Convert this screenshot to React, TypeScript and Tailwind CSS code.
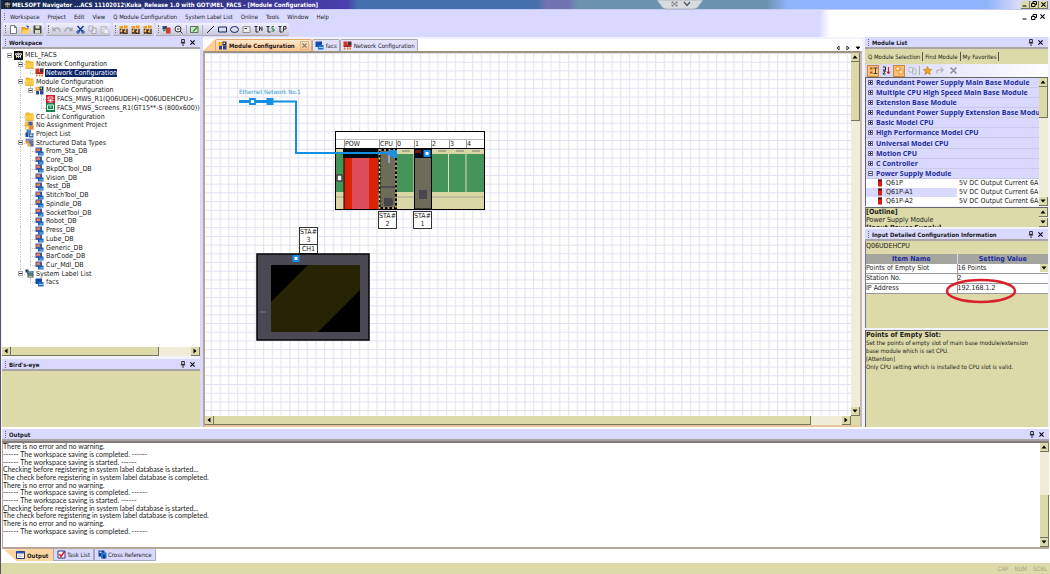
import { useState, ReactNode } from 'react'
import clsx from 'clsx'

type IconName =
    | 'root' | 'folder' | 'net' | 'module' | 'plc' | 'got' | 'unassigned'
    | 'projects' | 'types' | 'struct' | 'labels' | 'label'

interface TreeNode {
    text: string
    icon: IconName
    open?: boolean
    guides: string
}

const structs = ['From_Sta_DB', 'Core_DB', 'BkpDCTool_DB', 'Vision_DB', 'Test_DB', 'StitchTool_DB', 'Spindle_DB', 'SocketTool_DB', 'Robot_DB', 'Press_DB', 'Lube_DB', 'Generic_DB', 'BarCode_DB', 'Cur_Mdl_DB']

// guides: one letter per column, l = line, e = last child, o = empty
const tree: TreeNode[] = [
    { text: 'MEL_FACS', icon: 'root', open: true, guides: 'o' },
    { text: 'Network Configuration', icon: 'folder', open: true, guides: 'ol' },
    { text: 'Network Configuration', icon: 'net', guides: 'ole' },
    { text: 'Module Configuration', icon: 'folder', open: true, guides: 'ol' },
    { text: 'Module Configuration', icon: 'module', open: true, guides: 'ole' },
    { text: 'FACS_MWS_R1(Q06UDEH)<Q06UDEHCPU>', icon: 'plc', guides: 'olol' },
    { text: 'FACS_MWS_Screens_R1(GT15**-S (800x600))', icon: 'got', guides: 'oloe' },
    { text: 'CC-Link Configuration', icon: 'folder', guides: 'ol' },
    { text: 'No Assignment Project', icon: 'unassigned', guides: 'ol' },
    { text: 'Project List', icon: 'projects', guides: 'ol' },
    { text: 'Structured Data Types', icon: 'types', open: true, guides: 'ol' },
    ...structs.map((text, i): TreeNode => ({ text, icon: 'struct', guides: i === structs.length - 1 ? 'ole' : 'oll' })),
    { text: 'System Label List', icon: 'labels', open: true, guides: 'oe' },
    { text: 'facs', icon: 'label', guides: 'ooe' },
]

const columnWidths = ['w-[11px]', 'w-[10px]', 'w-[11px]', 'w-[10px]']

const moduleGroups = ['Redundant Power Supply Main Base Module', 'Multiple CPU High Speed Main Base Module', 'Extension Base Module', 'Redundant Power Supply Extension Base Module', 'Basic Model CPU', 'High Performance Model CPU', 'Universal Model CPU', 'Motion CPU', 'C Controller', 'Power Supply Module']
const powerModules = ['Q61P', 'Q61P-A1', 'Q61P-A2']

const logLines = [
    'There is no error and no warning.',
    '------ The workspace saving is completed. ------',
    '------ The workspace saving is started. ------',
    'Checking before registering in system label database is started...',
    'The check before registering in system label database is completed.',
    'There is no error and no warning.',
    '------ The workspace saving is completed. ------',
    '------ The workspace saving is started. ------',
    'Checking before registering in system label database is started...',
    'The check before registering in system label database is completed.',
    'There is no error and no warning.',
    '------ The workspace saving is completed. ------',
]

const iconShapes: Record<IconName, ReactNode> = {
    root: <><path d="M0 0h18v18H0z" fill="#111" /><path d="M3 5h4v3H3zM11 5h4v3h-4zM5 8v6M9 3v11M13 8v6M4 11h10" stroke="#fff" strokeWidth="1.5" fill="none" /></>,
    folder: <><path d="M1 1h7l2 2h7v14H1z" fill="#f5b422" /><path d="M1 6h16v11H1z" fill="#ffcb4a" /><path d="M1 16.500h16" stroke="#c98913" /></>,
    net: <><path d="M1 1h7v7H1z" fill="#e03020" /><path d="M9 1h8v7H9z" fill="#48302c" /><path d="M1 8h16v4H1z" fill="#b42a1c" /><path d="M2 13h3v4H2zM8 13h3v4H8zM13 13h3v4h-3z" fill="#e8752a" /></>,
    module: <><path d="M1 2h8v8H1z" fill="#f2a822" /><path d="M9 1h8v8H9z" fill="#24345f" /><path d="M2 10h6v7H2zM10 9h7v8h-7z" fill="#27479a" /><path d="M4 4h3v3H4zM11 3h3v3h-3z" fill="#ffe28a" /></>,
    plc: <><path d="M0 0h18v18H0z" fill="#d9182c" /><path d="M4 4h10v4H4zM3 11h12M9 8v6M5 14h8" stroke="#fff" strokeWidth="1.5" fill="none" /></>,
    got: <><path d="M0 0h18v18H0z" fill="#128447" /><path d="M3 4h12v9H3z" stroke="#e9fff0" strokeWidth="2" fill="none" /><path d="M7 8h4" stroke="#e9fff0" strokeWidth="2" /></>,
    unassigned: <><path d="M0 1h8l2 2h7v14H0z" fill="#f6b735" /><path d="M7 1h8v8H7z" fill="#4a5da8" /><path d="M2 11h5v5H2z" fill="#fff0be" /><path d="M9 10h8v7H9z" fill="#e9853c" /></>,
    projects: <><path d="M3 1h9v7H3z" fill="#4389cf" /><path d="M1 7h6v9H1z" fill="#1d4d91" /><path d="M8 8h9v9H8z" fill="#3b63a8" /><path d="M10 10h5M10 13h5" stroke="#fff" strokeWidth="1.5" /></>,
    types: <><path d="M1 1h16v5H1z" fill="#7f8cb4" /><path d="M1 6h6v5H1z" fill="#ea8a27" /><path d="M7 6h10v6H7z" fill="#62749f" /><path d="M5 11h6v6H5z" fill="#efaa3a" /><path d="M11 12h6v5h-6z" fill="#3f66b6" /></>,
    struct: <><path d="M1 1h13v11H1z" fill="#4257a4" /><path d="M3 3h7v5H3z" fill="#ec7e4b" /><path d="M6 9h11v8H6z" fill="#1a62b5" /><path d="M9 14h7" stroke="#a8dcff" strokeWidth="1.500" /></>,
    labels: <><path d="M1 1h6v6H1z" fill="#1c2e66" /><path d="M4 4h13v6H4z" fill="#356f9a" /><path d="M5 10h12v7H5z" fill="#2b506a" /><path d="M7 6h8M7 12h8M7 15h8" stroke="#d6d680" strokeWidth="1.5" /></>,
    label: <><path d="M1 1h13v11H1z" fill="#1449a8" /><path d="M6 8h11v9H6z" fill="#1e6fd0" /><path d="M8 13h8" stroke="#cde9ff" strokeWidth="1.500" /></>,
}

const Icon = ({ name }: { name: IconName }) => (
    <svg viewBox="0 0 18 18" className="size-[9px] shrink-0">{iconShapes[name]}</svg>
)

const Toggle = ({ open, dark }: { open?: boolean, dark?: boolean }) => (
    <svg viewBox="0 0 5 5" className="size-[5px] shrink-0" shapeRendering="crispEdges">
        <path d="M0.5 0.5h4v4h-4z" fill="#fff" stroke={dark ? '#66669a' : '#a8a8b0'} />
        <path d="M1 2.500h3" stroke="#333" />
        {!open && <path d="M2.500 1v3" stroke="#333" />}
    </svg>
)

const Pin = () => (
    <svg viewBox="0 0 6 8" className="h-[7px] w-[6px]"><path d="M1.500 .5h3v3.500h-3zM.5 4.500h5M3 5v3" stroke="#111" fill="none" /></svg>
)

const Cross = ({ className = 'stroke-black' }: { className?: string }) => (
    <svg viewBox="0 0 6 6" className={clsx('size-[5px]', className)}><path d="M.5.5l5 5M5.500.5l-5 5" strokeWidth="1.300" fill="none" /></svg>
)

const PanelHeader = ({ title }: { title: string }) => (
    <div className="flex h-[12px] shrink-0 items-center border-b-2 border-[#a9a5a5] bg-[#d9d9ff] pl-[3px] pr-[5px]">
        <span className="mr-[3px] h-[7px] border-l border-dotted border-[#666]" />
        <h2 className="flex-1 truncate text-[6px] font-bold">{title}</h2>
        <div className="flex items-center gap-[3px]">
            <button aria-label={`Pin ${title}`}><Pin /></button>
            <button aria-label={`Close ${title}`} className="pl-px"><Cross /></button>
        </div>
    </div>
)

const arrows = {
    up: 'M4 2.500L6.500 5.500h-5z',
    down: 'M4 5.500L1.500 2.500h5z',
    left: 'M2.500 4L5.500 1.500v5z',
    right: 'M5.500 4L2.500 1.500v5z',
}

const ArrowButton = ({ dir }: { dir: keyof typeof arrows }) => (
    <button aria-label={`Scroll ${dir}`} className="flex size-[9px] shrink-0 items-center justify-center border-b border-r border-[#77745c] bg-[#dcdaa8]">
        <svg viewBox="0 0 8 8" className="size-[8px]"><path d={arrows[dir]} /></svg>
    </button>
)

const HScroll = ({ children }: { children: ReactNode }) => (
    <div className="flex h-[9px] shrink-0 bg-[#efedd8]">
        <ArrowButton dir="left" />
        <div className="flex flex-1">{children}</div>
        <ArrowButton dir="right" />
    </div>
)

const VScroll = ({ children }: { children?: ReactNode }) => (
    <div className="flex w-[9px] shrink-0 flex-col bg-[#efedd8]">
        <ArrowButton dir="up" />
        <div className="flex flex-1 flex-col">{children}</div>
        <ArrowButton dir="down" />
    </div>
)

const thumb = 'border-b border-r border-[#77745c] bg-[#dcdaa8]'

const TitleBar = () => (
    <header className="relative flex h-[10px] shrink-0 items-center border-b border-[#c9c9f4] bg-[linear-gradient(to_right,#10284e_0%,#4a3fae_33%,#4470ad_34%,#4470ad_51%,#7272b0_52%,#7272b0_54%,#6b92ae_55%,#6b92ae_73%,#8fb4fb_75%,#8fb4fb_94%,#d9d9f8_97%)] pl-[3px] text-white">
        <svg viewBox="0 0 14 14" className="mr-px size-[7px]"><path d="M0 0h14v14H0z" fill="#111" /><path d="M2 4h4v3H2zM8 4h4v3H8zM4 7v6M10 7v6M7 2v11" stroke="#fff" fill="none" /></svg>
        <h1 className="flex-1 text-[6px] font-bold whitespace-nowrap">MELSOFT Navigator ...ACS 11102012\Kuka_Release 1.0 with GOT\MEL_FACS - [Module Configuration]</h1>
        <svg viewBox="0 0 46 10" className="absolute left-[656px] top-0 h-[10px] w-[46px]">
            <path d="M0 0h46l-5 7q-2 2-4 2H9q-2 0-4-2z" fill="#d8dce0" stroke="#8da0ac" strokeWidth=".6" />
            <path d="M15 2l5 4M20 2l-5 4M15 3.500v-1.500h1.500M20 3.500v-1.500h-1.500M15 4.500v1.500h1.500M20 4.500v1.500h-1.500" stroke="#707478" strokeWidth=".8" fill="none" />
            <path d="M27 2l3 3.500 3-3.500" stroke="#555" strokeWidth="1.400" fill="none" />
        </svg>
        <WindowButtons raised />
    </header>
)

const WindowButtons = ({ raised }: { raised?: boolean }) => {
    const frame = clsx('flex h-[8px] w-[9px] items-center justify-center', raised && 'border-b border-r border-[#77745c] bg-[#dcdaa8]')
    return (
        <div className="flex pr-[2px]">
            <button aria-label="Minimize" className={frame}><svg viewBox="0 0 6 6" className="size-[6px]"><path d="M.5 5h4" stroke="#000" /></svg></button>
            <button aria-label="Restore" className={frame}><svg viewBox="0 0 6 6" className="size-[6px]"><path d="M2 2V.5h3.500v3H4M.5 2.500h3.500v3H.5z" stroke="#000" fill="none" /></svg></button>
            <button aria-label="Close" className={frame}><Cross /></button>
        </div>
    )
}

const menuItems = ['Workspace', 'Project', 'Edit', 'View', 'Q Module Configuration', 'System Label List', 'Online', 'Tools', 'Window', 'Help']

const MenuBar = () => (
    <nav className="flex h-[13px] shrink-0 items-center pl-[3px] pr-px">
        <span className="mr-[5px] h-[7px] border-l border-dotted border-[#777]" />
        <div className="flex flex-1 gap-[8px] text-[6px]">
            {menuItems.map(item => <button key={item} className="whitespace-nowrap">{item}</button>)}
        </div>
        <WindowButtons />
    </nav>
)

const Tool = ({ label, children }: { label: string, children: ReactNode }) => (
    <button aria-label={label}><svg viewBox="0 0 18 18" className="size-[9px]">{children}</svg></button>
)

const ToolGroup = ({ children }: { children: ReactNode }) => (
    <div className="flex h-[13px] items-center gap-[3px] rounded-r-xs border-b border-[#a9a9b4] bg-linear-to-b from-[#f0f0ff] to-[#c9c9da] px-[2px]">
        <span className="h-[8px] border-l border-dotted border-[#777]" />
        {children}
    </div>
)

const Modules = () => <><path d="M1 2h7v6H1zM10 1h7v6h-7z" fill="#f0a020" /><path d="M3 8v8h5v-6h3v7h5V8" stroke="#4b3220" strokeWidth="3" fill="none" /><path d="M2 12h4M10 13h4" stroke="#f4b942" strokeWidth="3" /></>

const Topology = ({ tag, color = '#333' }: { tag: string, color?: string }) => (
    <><path d="M1 3h6M4 3v11h5" stroke="#222" strokeWidth="2" fill="none" /><path d={tag} stroke={color} strokeWidth="2" fill="none" /></>
)

const Toolbar = () => (
    <div className="flex h-[14px] shrink-0 items-start gap-[2px] pl-[2px]">
        <ToolGroup>
            <Tool label="New"><path d="M3 1h8l4 4v12H3zM11 1v4h4" fill="#fff" stroke="#555" strokeWidth="1.500" /></Tool>
            <Tool label="Open"><path d="M1 4h6l2 2h6v10H1z" fill="#e89c1b" /><path d="M4 9h14l-3 8H1z" fill="#ffd052" /><path d="M10 1l6 1-2 5" fill="#2b55a8" /></Tool>
            <Tool label="Save"><path d="M1 1h14l2 2v14H1z" fill="#444837" /><path d="M5 1h8v6H5zM4 10h10v7H4z" fill="#d9dbc8" /></Tool>
        </ToolGroup>
        <ToolGroup>
            <Tool label="Undo"><path d="M2 5v6h6M3 10c3-6 12-6 13 3" stroke="#a9a9b0" strokeWidth="3" fill="none" /></Tool>
            <Tool label="Redo"><path d="M16 5v6h-6M15 10C12 4 3 4 2 13" stroke="#a9a9b0" strokeWidth="3" fill="none" /></Tool>
            <Tool label="Cut"><path d="M3 2l10 11M15 2L5 13" stroke="#173f99" strokeWidth="3" /><circle cx="4" cy="14" r="2.500" fill="none" stroke="#173f99" strokeWidth="2" /><circle cx="14" cy="14" r="2.500" fill="none" stroke="#173f99" strokeWidth="2" /></Tool>
            <Tool label="Copy"><path d="M2 2h8v10H2zM8 6h8v11H8z" fill="#ececf2" stroke="#9a9aa8" strokeWidth="1.500" /></Tool>
            <Tool label="Paste"><path d="M2 3h11v13H2z" fill="#dcdce4" stroke="#b0b0b8" strokeWidth="1.500" /><path d="M8 8h8v9H8z" fill="#f2f2f6" stroke="#b0b0b8" /></Tool>
        </ToolGroup>
        <ToolGroup>
            <Tool label="Module view"><Modules /></Tool>
            <Tool label="Module check"><Modules /></Tool>
            <Tool label="Module update"><Modules /></Tool>
        </ToolGroup>
        <ToolGroup>
            <Tool label="Parameters"><path d="M1 2h9v7H1z" fill="#2d4c75" /><path d="M8 5h9v12H8z" fill="#d23a32" /><path d="M2 11h5" stroke="#1c9d4f" strokeWidth="3" /></Tool>
            <Tool label="Zoom"><circle cx="8" cy="8" r="6" fill="#eef" stroke="#333" strokeWidth="2" /><path d="M12 12l5 5M6 8h5" stroke="#333" strokeWidth="2" /></Tool>
            <span className="h-[9px] border-l border-[#aaaab8]" />
            <Tool label="Edit comment"><path d="M1 3h15v12H1z" fill="#cfe7c5" stroke="#557755" strokeWidth="2" /><path d="M6 13l9-9" stroke="#2f9c34" strokeWidth="3" /></Tool>
            <span className="h-[9px] border-l border-[#aaaab8]" />
            <Tool label="Line"><path d="M2 16L16 2" stroke="#102660" strokeWidth="2" /></Tool>
            <Tool label="Rectangle"><path d="M1 4h16v10H1z" fill="none" stroke="#102660" strokeWidth="2" /></Tool>
            <Tool label="Ellipse"><ellipse cx="9" cy="9" rx="8" ry="6" fill="none" stroke="#102660" strokeWidth="2" /></Tool>
            <Tool label="Text box"><path d="M2 3h14v12H2z" fill="#eee" stroke="#777" strokeWidth="1.500" /><path d="M5 7h5" stroke="#333" strokeWidth="2" /></Tool>
            <Tool label="Network tree"><Topology tag="M11 12V3l5 8V3" /></Tool>
            <Tool label="Station tree"><Topology tag="M11 12h5V8h-4V3h4" color="#1c7c44" /></Tool>
            <Tool label="Project tree"><Topology tag="M11 13V3h5v5h-5" /></Tool>
        </ToolGroup>
    </div>
)

const TreeRow = ({ node, selected, onSelect }: { node: TreeNode, selected: boolean, onSelect: () => void }) => {
    const guides = node.guides.split('')
    return (
        <li className="flex min-h-0 flex-1 items-center pl-[2px]">
            {guides.map((guide, i) => {
                const last = i === guides.length - 1
                return (
                    <span key={i} className={clsx('relative flex h-full shrink-0 items-center', last ? 'w-[10px] pl-[3px]' : columnWidths[i])}>
                        {guide !== 'o' && <span className={clsx('absolute left-[5px] top-0 border-l border-dotted border-[#c5c5c5]', guide === 'l' ? 'h-full' : 'h-1/2')} />}
                        {last && guide !== 'o' && <span className="absolute left-[5px] top-1/2 w-[5px] border-t border-dotted border-[#c5c5c5]" />}
                        {last && node.open && <span className="relative"><Toggle open /></span>}
                    </span>
                )
            })}
            <Icon name={node.icon} />
            <button onClick={onSelect} className={clsx('ml-px whitespace-nowrap pl-px leading-[8px]', selected && 'bg-[#0a246a] text-white')}>{node.text}</button>
        </li>
    )
}

const WorkspacePanel = () => {
    const [selected, setSelected] = useState(2)
    return (
        <section className="flex min-h-0 flex-1 flex-col">
            <PanelHeader title="Workspace" />
            <div className="min-h-0 flex-1 overflow-hidden bg-white">
                <ul className="flex h-[238px] flex-col pt-[2px] text-[7px]">
                    {tree.map((node, i) => (
                        <TreeRow key={i} node={node} selected={selected === i} onSelect={() => setSelected(i)} />
                    ))}
                </ul>
            </div>
            <HScroll><div className={clsx('w-[82%]', thumb)} /></HScroll>
        </section>
    )
}

const StationTag = ({ lines }: { lines: string[] }) => (
    <div className="w-[19px] border border-[#333] bg-white text-center text-[7px] leading-[8px]">
        {lines.map((line, i) => <div key={i} className={clsx(i === 2 && 'border-t border-[#333]')}>{line}</div>)}
    </div>
)

const slots = [['POW', 'w-[35px]'], ['CPU', 'w-[17px]'], ['0', 'w-[18px]'], ['1', 'w-[17px]'], ['2', 'w-[18px]'], ['3', 'w-[17px]'], ['4', 'w-[17px]']]

const BaseRack = () => (
    <div className="w-[150px] border border-black bg-white">
        <div className="h-[8px] border-b border-[#bbb]" />
        <div className="flex h-[9px] border-b border-black pl-[8px] text-[7px] leading-[8px]">
            {slots.map(([name, width]) => <span key={name} className={clsx('shrink-0 border-l border-[#999]', width)}>{name}</span>)}
        </div>
        <svg viewBox="0 0 148 60" className="block h-[60px] w-full">
            <path d="M0 0h148v60H0z" fill="#dad6a5" />
            <path d="M0 5h148v38H0z" fill="#45955a" />
            <path d="M112.500 5v38M130 5v38M78 5v38" stroke="#d8e0b4" />
            <path d="M0 48h148" stroke="#a8a694" />
            <path d="M66 2h8M102 2h8M120 2h8M136 2h8" stroke="#9b9a86" strokeWidth="1.500" />
            <path d="M1 26h5v6H1z" fill="#fff" stroke="#444" strokeWidth="1.500" />
            <path d="M8 0h34v60H8z" fill="#d92206" />
            <path d="M16 9h17v51H16z" fill="#dc4d59" />
            <path d="M7 0h35v9H7z" fill="#020912" />
            <path d="M8 0v60" stroke="#000" />
            <path d="M43 0h16v60H43z" fill="#6d6b59" />
            <path d="M43 38h16M47 59h8" stroke="#44444a" strokeWidth="1.500" />
            <path d="M48 49h6q3 0 3 4t-3 4h-6z" fill="#46464a" />
            <path d="M53 5v9" stroke="#9aa4b0" strokeWidth="2" />
            <path d="M43.500 1h16.500v58H43.500z" fill="none" stroke="#000" strokeWidth="2" />
            <path d="M43.500 1h16.500v58H43.500z" fill="none" stroke="#ecd48a" strokeWidth="1.500" strokeDasharray="2 2.500" />
            <path d="M78.500 0h17v60h-17z" fill="#6d6b59" stroke="#000" />
            <path d="M78 0h18v9H78z" fill="#050a18" />
            <path d="M79 1h6v3h-6z" fill="#6a1a1a" />
            <path d="M83 41h8v9h-8z" fill="#48464f" />
        </svg>
    </div>
)

const Terminal = () => (
    <svg viewBox="0 0 114 88" className="block h-[88px] w-[114px]">
        <path d="M1 1h112v86H1z" fill="#4a4853" stroke="#050505" strokeWidth="1.500" />
        <path d="M15 12h89v67H15z" fill="#262405" />
        <path d="M15 12h37L15 49z" fill="#000" />
        <path d="M104 37v42H62z" fill="#000" />
        <path d="M4 59h6" stroke="#77757f" />
    </svg>
)

const Canvas = () => (
    <div className="relative min-w-0 flex-1 overflow-hidden bg-white">
        <svg className="absolute size-full">
            <defs>
                <pattern id="grid" width="8.710" height="8.710" patternUnits="userSpaceOnUse">
                    <path d="M6.500 0v8.710M0 .5h8.710" stroke="#e0e0f2" fill="none" />
                </pattern>
            </defs>
            <rect width="100%" height="100%" fill="url(#grid)" />
        </svg>
        <div className="absolute left-[130px] top-[78px]"><BaseRack /></div>
        <div className="absolute left-[173px] top-[158px]"><StationTag lines={['STA#', '2']} /></div>
        <div className="absolute left-[208px] top-[158px]"><StationTag lines={['STA#', '1']} /></div>
        <div className="absolute left-[94px] top-[174px]"><StationTag lines={['STA#', '3', 'CH1']} /></div>
        <div className="absolute left-[51px] top-[200px]"><Terminal /></div>
        <span className="absolute left-[34px] top-[34px] whitespace-nowrap text-[6px] leading-[9px] text-[#2a94d2]">Ethernet Network No.1</span>
        <svg viewBox="0 0 240 220" className="absolute left-0 top-0 h-[220px] w-[240px]">
            <path d="M34 48.500h57v51.500h94" stroke="#1390e4" strokeWidth="2" fill="none" />
            <path d="M34 48.500h34" stroke="#1390e4" strokeWidth="3" />
            <path d="M180 100l6-3h6v8h-3z" fill="#1e8ee6" />
            <path d="M45 46h5v5h-5z" fill="#fff" stroke="#1390e4" strokeWidth="1.800" />
            <path d="M61.500 45h7v7h-7z" fill="#1390e4" />
            <path d="M219.500 98h5v5h-5zM88.500 203h5v5h-5z" fill="#fff" stroke="#1390e4" strokeWidth="2" />
        </svg>
    </div>
)

const DocTab = ({ children, active }: { children: ReactNode, active?: boolean }) => (
    <button className={clsx('flex h-[12px] items-center gap-[2px] whitespace-nowrap rounded-t-xs border border-b-0 px-[2px] text-[6px]', active ? 'border-[#e2a870] bg-linear-to-b from-[#ffe9cd] to-[#fdc688] font-bold' : 'border-[#aaa] bg-[#e2e2ff]')}>{children}</button>
)

const Editor = () => (
    <section className="flex min-w-0 flex-1 flex-col pt-[2px]">
        <div className="flex h-[12px] shrink-0 items-end bg-white">
            <svg viewBox="0 0 12 12" className="size-[12px] shrink-0"><path d="M0 12L12 0v12z" fill="#fdcf99" /></svg>
            <DocTab active><Icon name="module" />Module Configuration<span className="ml-[3px] border border-[#d8b48e] p-px"><Cross className="stroke-[#777]" /></span></DocTab>
            <DocTab><Icon name="label" />facs</DocTab>
            <DocTab><Icon name="net" />Network Configuration</DocTab>
            <div className="flex flex-1 items-center justify-end gap-[4px] pr-px">
                {(['left', 'right', 'down'] as const).map(dir => (
                    <button key={dir} aria-label={`Tabs ${dir}`}><svg viewBox="0 0 8 8" className="size-[6px]"><path d={arrows[dir]} fill={dir === 'down' ? '#000' : '#fff'} stroke="#000" /></svg></button>
                ))}
            </div>
        </div>
        <div className="flex min-h-0 flex-1 flex-col border-2 border-b-[#e5c79b] border-l-[#b9a596] border-r-[#c9b8b0] border-t-[#9b9580]">
            <div className="flex min-h-0 flex-1">
                <Canvas />
                <VScroll><div className={clsx('h-[17%]', thumb)} /></VScroll>
            </div>
            <div className="flex bg-[#dcdaa8]">
                <div className="flex-1"><HScroll><div className={clsx('w-[95%]', thumb)} /></HScroll></div>
                <span className="w-[9px]" />
            </div>
        </div>
    </section>
)

const ListTool = ({ label, on, children }: { label: string, on?: boolean, children: ReactNode }) => (
    <button aria-label={label} className={clsx('flex size-[12px] items-center justify-center', on && 'border border-[#c98a3c] bg-[#fdbf73]')}>
        <svg viewBox="0 0 18 18" className="size-[9px]">{children}</svg>
    </button>
)

const ModuleList = () => (
    <section className="flex flex-col">
        <PanelHeader title="Module List" />
        <div className="flex h-[15px] items-center bg-[#dcdaa8] text-[6px]">
            {['Q Module Selection', 'Find Module', 'My Favorites'].map((tab, i) => (
                <button key={tab} className={clsx('h-[9px] whitespace-nowrap border-r border-[#555] px-[2px] leading-[9px]', i === 0 && 'pl-[3px]')}>{tab}</button>
            ))}
        </div>
        <div className="flex h-[13px] items-center gap-px bg-linear-to-r from-[#d5d5f6] to-white pl-[2px]">
            <ListTool label="Tree view" on><path d="M2 3h5v4H2zM2 11h5v4H2z" fill="#aa5a18" /><path d="M9 4h8M13 4v11M9 15h8" stroke="#444" strokeWidth="2" fill="none" /></ListTool>
            <ListTool label="Sort"><path d="M2 2h5v6H2M2 16l5-6H2M7 16H2" stroke="#222" strokeWidth="2" fill="none" /><path d="M13 2v13M10 11l3 5 3-5" stroke="#c9232f" strokeWidth="2" fill="none" /></ListTool>
            <ListTool label="Show details" on><path d="M2 2h8v7H2zM8 8h8v8H8z" fill="#ffe6b8" stroke="#e2953b" strokeWidth="2" /></ListTool>
            <ListTool label="Compare"><path d="M2 3h8v9H2zM9 6h7v10H9z" fill="#e8e8f4" stroke="#acacb8" strokeWidth="1.500" /></ListTool>
            <span className="h-[9px] border-l border-[#aaa]" />
            <ListTool label="Add favorite"><path d="M9 1l2.500 5.500 6 .7-4.500 4 1.300 6L9 14l-5.300 3.200 1.300-6-4.500-4 6-.7z" fill="#f5a516" stroke="#a06818" /></ListTool>
            <ListTool label="Move"><path d="M2 15V8h10M9 3l6 5-6 5" stroke="#a4a4ae" strokeWidth="2" fill="none" /></ListTool>
            <ListTool label="Remove"><path d="M3 3l12 12M15 3L3 15" stroke="#8e8e98" strokeWidth="3" /></ListTool>
        </div>
        <div className="flex h-[129px] border-t border-l border-[#666]">
            <ul className="flex min-w-0 flex-1 flex-col bg-[#c9c9ea] text-[7px]">
                {moduleGroups.map((group, i) => (
                    <li key={group} className="flex min-h-0 flex-1 items-center gap-[3px] border-b border-[#c9c9ea] bg-[#d9d9ff] pl-[2px] font-['Open_Sans',sans-serif] font-bold text-[#1c2c9c]">
                        <Toggle dark open={i === moduleGroups.length - 1} />
                        <span className="whitespace-nowrap">{group}</span>
                    </li>
                ))}
                {powerModules.map((name, i) => (
                    <li key={name} className={clsx('flex min-h-0 flex-1 items-center overflow-hidden pl-[11px]', i === 1 ? 'bg-[#d9d9ff]' : 'bg-white')}>
                        <svg viewBox="0 0 10 16" className="h-[8px] w-[6px]"><path d="M1 1h8v14H1z" fill="#d22018" /><path d="M1 1h8v4H1z" fill="#5c1714" /></svg>
                        <span className="flex-1 pl-[3px]">{name}</span>
                        <span className="w-[82px] whitespace-nowrap bg-white pl-[2px]">5V DC Output Current 6A</span>
                    </li>
                ))}
            </ul>
            <VScroll><div className={clsx('h-[28%]', thumb)} /></VScroll>
        </div>
        <div className="mt-px flex h-[20px] border-t border-l border-[#666] bg-[#dcdaa8]">
            <div className="flex-1 overflow-hidden text-[7px] leading-[8px]">
                <p className="font-bold">[Outline]</p>
                <p>Power Supply Module</p>
                <p className="font-bold">[Input Power Supply]</p>
            </div>
            <VScroll />
        </div>
    </section>
)

const DetailPanel = () => {
    const [points, setPoints] = useState('16 Points')
    const [station, setStation] = useState('2')
    const [ip, setIp] = useState('192.168.1.2')
    const field = 'block h-[9px] w-full bg-white text-[7px] leading-[9px] outline-none'

    return (
        <section className="mt-[2px] flex flex-1 flex-col">
            <PanelHeader title="Input Detailed Configuration Information" />
            <div className="relative h-[87px] border-l border-[#777] bg-[#dcdaa8] text-[7px]">
                <p className="h-[13px] leading-[11px]">Q06UDEHCPU</p>
                <table className="w-full table-fixed border-collapse leading-[9px]">
                    <thead>
                        <tr className="h-[10px] bg-[#a5a5a0] text-[#1c2c9c]">
                            <th className="border-r border-[#d9d9ff] p-0">Item Name</th>
                            <th className="p-0">Setting Value</th>
                        </tr>
                    </thead>
                    <tbody className="bg-white">
                        <tr className="border-b border-[#999]">
                            <td className="border-r border-[#999] p-0"><label htmlFor="points">Points of Empty Slot</label></td>
                            <td className="relative p-0">
                                <select id="points" value={points} onChange={e => setPoints(e.target.value)} className={clsx(field, 'appearance-none')}>
                                    <option>16 Points</option>
                                    <option>0 Points</option>
                                    <option>32 Points</option>
                                </select>
                                <svg viewBox="0 0 8 8" className="pointer-events-none absolute right-0 top-0 size-[8px] bg-[#dcdaa8]"><path d={arrows.down} /></svg>
                            </td>
                        </tr>
                        <tr className="border-b border-[#999]">
                            <td className="border-r border-[#999] p-0"><label htmlFor="station">Station No.</label></td>
                            <td className="p-0"><input id="station" value={station} onChange={e => setStation(e.target.value)} className={field} /></td>
                        </tr>
                        <tr className="border-b border-[#999]">
                            <td className="border-r border-[#999] p-0"><label htmlFor="ip">IP Address</label></td>
                            <td className="p-0"><input id="ip" value={ip} onChange={e => setIp(e.target.value)} className={field} /></td>
                        </tr>
                    </tbody>
                </table>
                <svg viewBox="0 0 74 26" className="pointer-events-none absolute left-[78px] top-[37px] h-[26px] w-[74px]"><ellipse cx="37" cy="13" rx="34" ry="11" fill="none" stroke="#d8202a" strokeWidth="2.500" /></svg>
            </div>
            <div className="mt-[2px] flex-1 border-t border-l border-[#666] bg-[#dcdaa8] text-[7px] leading-[8px]">
                <h3 className="font-bold">Points of Empty Slot:</h3>
                <div className="text-[6px] leading-[8px]">
                    <p>Set the points of empty slot of main base module/extension<br />base module which is set CPU.</p>
                    <p>[Attention]</p>
                    <p>Only CPU setting which is installed to CPU slot is valid.</p>
                </div>
            </div>
        </section>
    )
}

const OutputPanel = () => (
    <section className="shrink-0">
        <PanelHeader title="Output" />
        <div className="flex h-[108px] border-y-2 border-l border-[#b9a596] border-t-[#857c7c] bg-white">
            <ul className="flex h-[92px] flex-1 flex-col text-[7px] font-['Lato',sans-serif]">
                {logLines.map((line, i) => <li key={i} className="flex min-h-0 flex-1 items-center whitespace-nowrap">{line}</li>)}
            </ul>
            <VScroll>
                <div className="flex-1" />
                <div className={clsx('h-1/2', thumb)} />
            </VScroll>
        </div>
        <div className="flex h-[14px] items-start text-[6px]">
            <svg viewBox="0 0 15 12" className="h-[12px] w-[14px]"><path d="M2 0h13v12z" fill="#fdd5a2" /></svg>
            <button className="flex h-[12px] items-center gap-[2px] bg-[#fdd5a2] pr-[5px] font-bold">
                <svg viewBox="0 0 18 16" className="h-[8px] w-[9px]"><path d="M1 1h16v14H1z" fill="#fff" stroke="#26357a" strokeWidth="2" /><path d="M1 1h16v4H1z" fill="#2a55b8" /><path d="M4 8h10M4 11h10" stroke="#888" /></svg>
                Output
            </button>
            <button className="flex h-[12px] items-center gap-px border border-t-0 border-[#a9a9c0] bg-[#d9d9ff] px-[3px]">
                <svg viewBox="0 0 18 18" className="size-[9px]"><path d="M2 2h14v14H2z" fill="#fff" stroke="#26357a" strokeWidth="2" /><path d="M5 8l3 5 7-10" stroke="#cc1f2b" strokeWidth="3" fill="none" /></svg>
                Task List
            </button>
            <button className="flex h-[12px] items-center gap-px border border-t-0 border-[#a9a9c0] bg-[#d9d9ff] px-[3px]">
                <svg viewBox="0 0 18 18" className="size-[9px]"><path d="M1 1h12v12H1z" fill="#143c92" /><path d="M6 5h11v12H6z" fill="#2773cf" /><path d="M3 3h4v3H3z" fill="#bde1ff" /><path d="M12 10v7" stroke="#0b1f4c" strokeWidth="3" /></svg>
                Cross Reference
            </button>
        </div>
    </section>
)

export default function App() {
    return (
        <div className="flex min-h-screen flex-col overflow-hidden border-l border-[#5c5360] bg-white font-['DejaVu_Sans_Condensed','DejaVu_Sans',sans-serif] text-[7px] leading-[9px] text-[#1a1a1a]">
            <TitleBar />
            <div className="bg-[linear-gradient(to_right,#d9d9ff_78%,#ffffff_79%)]">
                <MenuBar />
                <Toolbar />
            </div>
            <main className="flex min-h-0 flex-1 bg-[#f1f1ff] pl-px">
                <aside className="flex w-[198px] shrink-0 flex-col">
                    <WorkspacePanel />
                    <section className="mt-[3px] h-[68px]">
                        <PanelHeader title="Bird's-eye" />
                        <div className="h-[56px] bg-[#dcdaa8]" />
                    </section>
                </aside>
                <span className="w-[3px] bg-[#d9d9ff]" />
                <Editor />
                <aside className="ml-[3px] flex w-[185px] shrink-0 flex-col pr-[2px]">
                    <ModuleList />
                    <DetailPanel />
                </aside>
            </main>
            <div className="mt-[2px] px-px"><OutputPanel /></div>
            <footer className="flex h-[11px] shrink-0 items-center justify-end gap-[6px] bg-[#dcdaa8] pr-[3px] text-[6px] text-[#a5a386]">
                <span>CAP</span><span>NUM</span><span>SCRL</span>
            </footer>
        </div>
    )
}
